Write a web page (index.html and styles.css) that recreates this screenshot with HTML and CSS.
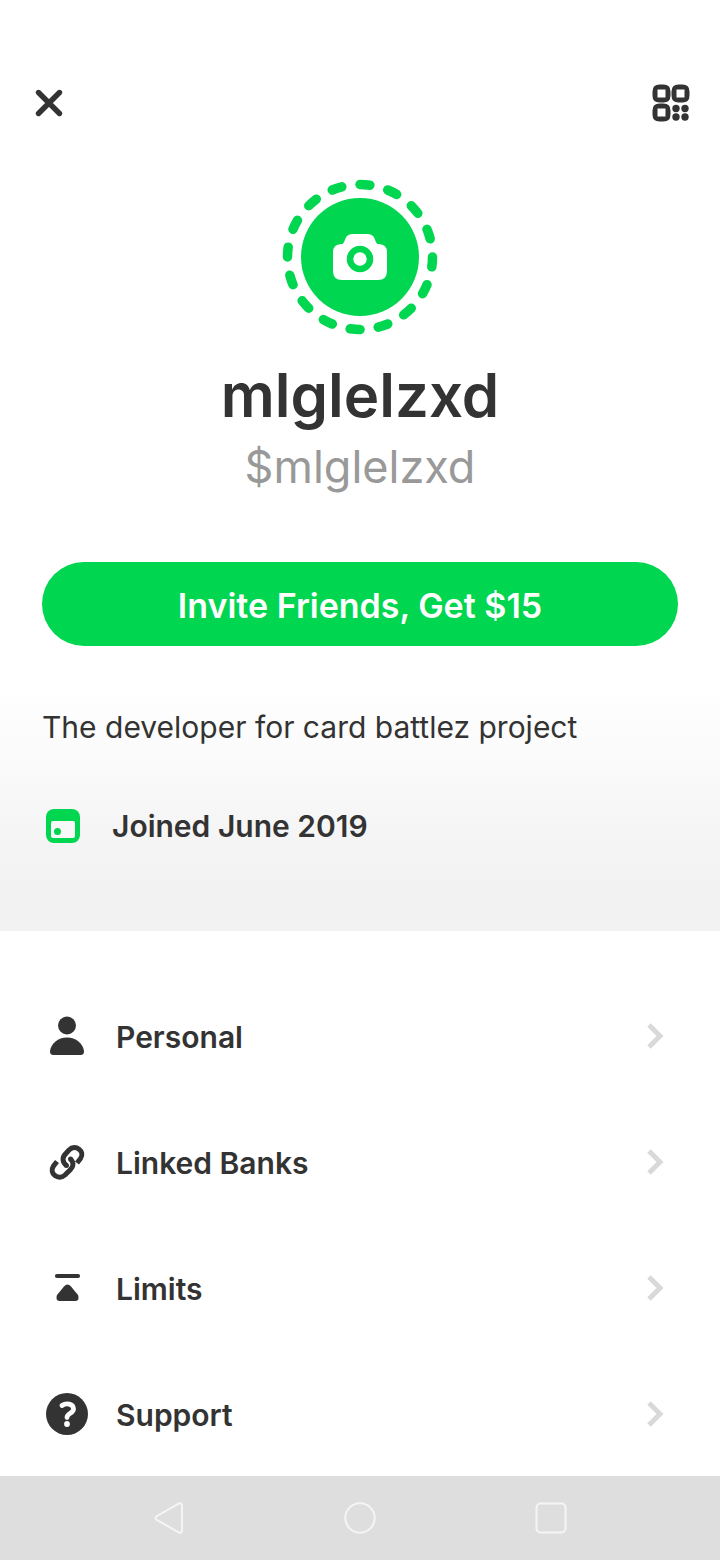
FILE: index.html
```
<!DOCTYPE html>
<html lang="en">
<head>
    <meta charset="UTF-8">
    <meta name="viewport" content="width=device-width, initial-scale=1.0">
    <title>Profile</title>
    <link rel="stylesheet" href="styles.css">
</head>
<body>
    <main class="profile">
        <header class="topbar">
            <button class="icon-button" type="button" aria-label="Close">
                <svg width="38" height="38" viewBox="0 0 38 38"><path d="M8.500 8.500L29.500 29.500M29.500 8.500L8.500 29.500" fill="none" stroke="#333" stroke-width="5.400" stroke-linecap="round"/></svg>
            </button>
            <button class="icon-button" type="button" aria-label="QR code">
                <svg width="38" height="38" viewBox="0 0 38 38" fill="#333">
                    <path fill-rule="evenodd" d="M7.500 .500H11.500Q18.500 .500 18.500 7.500V11.500Q18.500 18.500 11.500 18.500H7.500Q.500 18.500 .500 11.500V7.500Q.500 .500 7.500 .500ZM5.500 5.500V13.500H13.500V5.500Z"/>
                    <path fill-rule="evenodd" d="M26.500 .500H30.500Q37.500 .500 37.500 7.500V11.500Q37.500 18.500 30.500 18.500H26.500Q19.500 18.500 19.500 11.500V7.500Q19.500 .500 26.500 .500ZM24.500 5.500V13.500H32.500V5.500Z"/>
                    <path fill-rule="evenodd" d="M7.500 19.500H11.500Q18.500 19.500 18.500 26.500V30.500Q18.500 37.500 11.500 37.500H7.500Q.500 37.500 .500 30.500V26.500Q.500 19.500 7.500 19.500ZM5.500 24.500V32.500H13.500V24.500Z"/>
                    <circle cx="24" cy="24.500" r="3.700"/><circle cx="33" cy="24.500" r="3.700"/>
                    <circle cx="24" cy="33" r="3.700"/><circle cx="33" cy="33" r="3.700"/>
                </svg>
            </button>
        </header>

        <button class="avatar" type="button" aria-label="Add photo">
            <svg width="156" height="156" viewBox="0 0 156 156">
                <circle cx="78" cy="78" r="72.500" fill="none" stroke="#00d64f" stroke-width="9.500" stroke-linecap="round" pathLength="160" stroke-dasharray="3.500 6.500" transform="rotate(-90 78 78)"/>
                <circle cx="78" cy="78" r="59" fill="#00d64f"/>
                <path d="M59 65C62 65 62 63 63.500 59.500Q65 55 71 55H85Q91 55 92.500 59.500C94 63 94 65 97 65Q105 65.500 105 73V92Q105 101 96 101H60Q51 101 51 92V73Q51 65.500 59 65Z" fill="#fff"/>
                <circle cx="78" cy="80" r="10" fill="#fff" stroke="#00d64f" stroke-width="6.500"/>
            </svg>
        </button>

        <h1 class="name">mlglelzxd</h1>
        <p class="cashtag">$mlglelzxd</p>

        <button class="invite" type="button">Invite Friends, Get $15</button>

        <section class="about">
            <p class="bio">The developer for card battlez project</p>
            <p class="joined">
                <svg width="34" height="34" viewBox="0 0 34 34"><rect width="34" height="34" rx="8" fill="#00d64f"/><rect x="5" y="12" width="24" height="17" rx="2" fill="#f8f8f8"/><circle cx="11.500" cy="22.500" r="3.500" fill="#00d64f"/></svg>
                <span>Joined June 2019</span>
            </p>
        </section>
    </main>

    <nav class="menu">
        <a class="menu-item" href="#personal">
            <svg width="42" height="42" viewBox="0 0 42 42" fill="#333"><circle cx="21" cy="10.500" r="9"/><path d="M7.500 40C5 40 3.800 38.500 4 36C5 28.500 12 22.500 21 22.500S37 28.500 38 36C38.200 38.500 37 40 34.500 40Z"/></svg>
            <span>Personal</span>
            <svg class="chevron" width="18" height="28" viewBox="0 0 18 28"><path d="M3 3L14 14L3 25"/></svg>
        </a>
        <a class="menu-item" href="#banks">
            <svg width="42" height="42" viewBox="0 0 42 42" fill="none" stroke="#333" stroke-width="5">
                <path d="M20.500 24.500C16.500 21.500 16 17 19 13.500L23 9C29.500 2.500 39.500 10.500 34.500 17.500L31 22"/>
                <path d="M24.500 18C28 21.500 27.500 25.500 24.500 28.500L19 34C12.500 40 2.500 32.500 7.500 25L11 20.500"/>
                <g fill="#333" stroke="none"><circle cx="20.500" cy="24.500" r="2.500"/><circle cx="24.500" cy="18" r="2.500"/></g>
            </svg>
            <span>Linked Banks</span>
            <svg class="chevron" width="18" height="28" viewBox="0 0 18 28"><path d="M3 3L14 14L3 25"/></svg>
        </a>
        <a class="menu-item" href="#limits">
            <svg width="42" height="42" viewBox="0 0 42 42" fill="#333"><path d="M11 9H32" stroke="#333" stroke-width="4.200" stroke-linecap="round"/><path d="M18 19.500Q21.500 15.500 25 19.500L32 28Q34 33.500 29.500 34H13.500Q9 33.500 11 28Z"/></svg>
            <span>Limits</span>
            <svg class="chevron" width="18" height="28" viewBox="0 0 18 28"><path d="M3 3L14 14L3 25"/></svg>
        </a>
        <a class="menu-item" href="#support">
            <svg width="42" height="42" viewBox="0 0 42 42"><circle cx="21" cy="21" r="21" fill="#333"/><path d="M16 12.500C20 9.500 27.500 10.500 27.500 16C27.500 20.500 21 20 21 24.500" fill="none" stroke="#fff" stroke-width="4.800" stroke-linecap="round"/><circle cx="21" cy="31" r="2.900" fill="#fff"/></svg>
            <span>Support</span>
            <svg class="chevron" width="18" height="28" viewBox="0 0 18 28"><path d="M3 3L14 14L3 25"/></svg>
        </a>
    </nav>

    <footer class="system-nav">
        <button class="icon-button" type="button" aria-label="Back"><svg width="36" height="36" viewBox="0 0 36 36"><path d="M28 3.500Q31 2.500 31 6V30Q31 33.500 28 32.500L6 20Q3 18 6 16Z"/></svg></button>
        <button class="icon-button" type="button" aria-label="Home"><svg width="36" height="36" viewBox="0 0 36 36"><circle cx="18" cy="18" r="14.700"/></svg></button>
        <button class="icon-button" type="button" aria-label="Recent apps"><svg width="36" height="36" viewBox="0 0 36 36"><rect x="3.500" y="3.500" width="29" height="29" rx="4"/></svg></button>
    </footer>
</body>
</html>
```
FILE: styles.css
```
* { margin: 0; padding: 0; box-sizing: border-box; }
body { font-family: Inter, "Liberation Sans", sans-serif; background: #fff; color: #333; min-height: 100vh; display: flex; flex-direction: column; }
svg { display: block; flex: none; }
button { font-family: inherit; border: none; background: none; cursor: pointer; }

.profile { display: flex; flex-direction: column; align-items: center; padding: 84px 0 0; }
.topbar { width: 100%; display: flex; justify-content: space-between; padding: 0 30px; }
.avatar { margin-top: 57px; border-radius: 50%; }
.name { margin-top: 24px; font-size: 60px; line-height: 72px; font-weight: 600; }
.cashtag { margin-top: 6px; font-size: 45px; line-height: 60px; color: #999; }
.invite { width: calc(100% - 84px); height: 84px; margin-top: 65px; padding-top: 2px; border-radius: 42px; background: #00d64f; color: #fff; font-size: 34px; font-weight: 600; }

.about { width: 100%; margin-top: 40px; padding: 20px 42px 84px; background: linear-gradient(#fff, #f2f2f2 80%); }
.bio { font-size: 30px; line-height: 42px; }
.joined { display: flex; align-items: center; gap: 32px; margin-top: 57px; padding-left: 4px; font-size: 30px; line-height: 42px; font-weight: 600; }

.menu { padding-top: 42px; }
.menu-item { display: flex; align-items: center; gap: 28px; height: 126px; padding: 0 56px 0 46px; color: inherit; text-decoration: none; font-size: 30px; font-weight: 600; }
.menu-item:last-child { height: 125px; }
.menu-item span { padding-top: 2px; }
.chevron { margin-left: auto; fill: none; stroke: #d9d9d9; stroke-width: 5; }

.system-nav { flex: 1; min-height: 84px; display: flex; align-items: center; justify-content: center; gap: 155px; background: #dedede; }
.system-nav svg { fill: none; stroke: #f5f5f5; stroke-width: 2; }
```
